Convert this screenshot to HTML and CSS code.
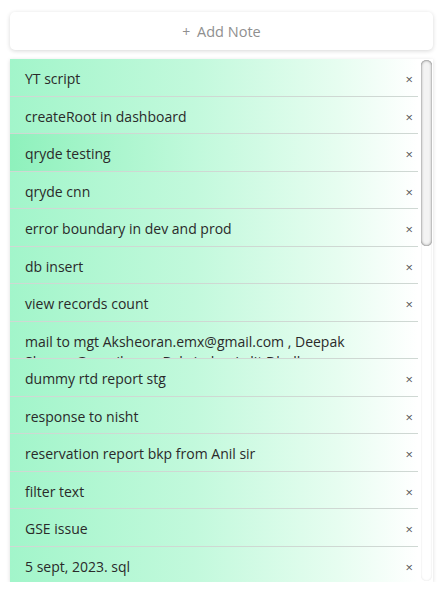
FILE: index.html
```html
<!DOCTYPE html>
<html>
<head>
<meta charset="utf-8">
<link rel="stylesheet" href="styles.css">
</head>
<body>
<div class="app">
  <button class="add-note"><span class="plus">+</span> Add Note</button>
  <div class="list">
    <ul class="notes">
      <li class="note"><div class="row"><span class="text">YT script</span><span class="close">×</span></div></li>
      <li class="note"><div class="row"><span class="text">createRoot in dashboard</span><span class="close">×</span></div></li>
      <li class="note strong"><div class="row"><span class="text">qryde testing</span><span class="close">×</span></div></li>
      <li class="note"><div class="row"><span class="text">qryde cnn</span><span class="close">×</span></div></li>
      <li class="note"><div class="row"><span class="text">error boundary in dev and prod</span><span class="close">×</span></div></li>
      <li class="note"><div class="row"><span class="text">db insert</span><span class="close">×</span></div></li>
      <li class="note"><div class="row"><span class="text">view records count</span><span class="close">×</span></div></li>
      <li class="note"><div class="row"><span class="text">mail to mgt Aksheoran.emx@gmail.com , Deepak Sharma@gmail.com, Balwinder, Lalit Dhull</span><span class="close">×</span></div></li>
      <li class="note"><div class="row"><span class="text">dummy rtd report stg</span><span class="close">×</span></div></li>
      <li class="note"><div class="row"><span class="text">response to nisht</span><span class="close">×</span></div></li>
      <li class="note"><div class="row"><span class="text">reservation report bkp from Anil sir</span><span class="close">×</span></div></li>
      <li class="note"><div class="row"><span class="text">filter text</span><span class="close">×</span></div></li>
      <li class="note"><div class="row"><span class="text">GSE issue</span><span class="close">×</span></div></li>
      <li class="note"><div class="row"><span class="text">5 sept, 2023. sql</span><span class="close">×</span></div></li>
    </ul>
    <div class="scrollbar">
      <div class="track"><div class="thumb"></div></div>
    </div>
  </div>
</div>
</body>
</html>
```
FILE: styles.css
```css
* { box-sizing: border-box; }
html, body {
  margin: 0;
  padding: 0;
  background: #fff;
  font-family: "Open Sans", "Noto Sans", sans-serif;
}
.app {
  padding: 12px 9px 0 10px;
  display: flex;
  flex-direction: column;
}
.add-note {
  height: 38px;
  width: 100%;
  border: none;
  background: #fff;
  border-radius: 5px;
  box-shadow: 0 1px 4px rgba(0, 0, 0, 0.16);
  color: #8f8f8f;
  font-family: inherit;
  font-size: 14.5px;
  padding: 0;
  cursor: pointer;
}
.plus {
  font-size: 14px;
  margin-right: 3px;
}
.list {
  margin-top: 9px;
  height: 523px;
  display: flex;
  background: #fff;
  box-shadow: 0 1px 4px rgba(0, 0, 0, 0.14);
}
.notes {
  list-style: none;
  margin: 0;
  padding: 0;
  flex: 1;
  overflow: hidden;
}
.note {
  height: 37.5px;
  overflow: hidden;
  padding: 10px 5px 0 15px;
  border-bottom: 1px solid #cfd8d3;
  background: linear-gradient(90deg, #a2f5ca 0%, #c2f9dc 45%, #e6fdf0 80%, #ffffff 100%);
  color: #2a2a2a;
  font-size: 14px;
  line-height: 20px;
}
.note.strong {
  background: linear-gradient(90deg, #8ef1bc 0%, #c0f9db 45%, #e6fdf0 80%, #ffffff 100%);
}
.row {
  display: flex;
  align-items: flex-end;
  justify-content: space-between;
}
.text {
  flex: 1;
}
.close {
  color: #555;
  font-size: 13px;
  line-height: 20px;
  margin-left: 8px;
}
.scrollbar {
  width: 15px;
  padding: 1px 1px 1px 3px;
}
.track {
  height: 100%;
  border-radius: 6px;
  box-shadow: inset 0 0 2px rgba(0, 0, 0, 0.14);
}
.thumb {
  height: 186px;
  border-radius: 6px;
  background: #f3f3f3;
  box-shadow: inset 0 0 3px rgba(0, 0, 0, 0.5), inset 0 0 1px rgba(0, 0, 0, 0.4);
}
```
